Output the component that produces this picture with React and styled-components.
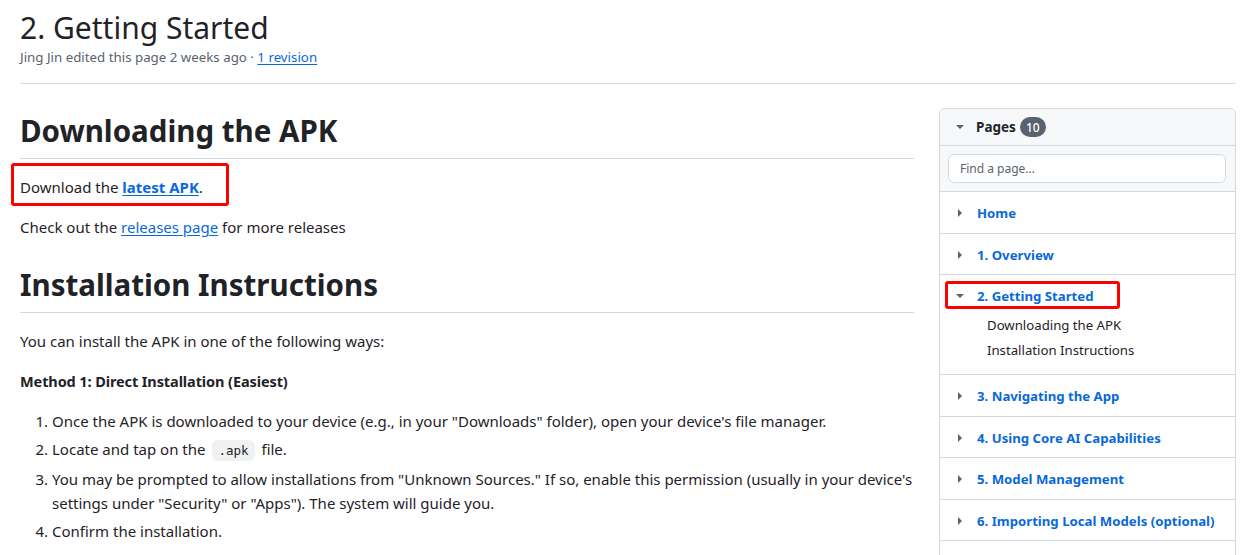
import React from 'react'
import styled, { createGlobalStyle } from 'styled-components'

const GlobalStyle = createGlobalStyle`
  body {
    margin: 0;
    background: #fff;
    color: #1f2328;
    font-family: "Noto Sans", "Liberation Sans", sans-serif;
  }
`

const Page = styled.div`
  padding: 0 6px 0 20px;
  width: 1242px;
  height: 555px;
  box-sizing: border-box;
  overflow: hidden;
`

const PageHead = styled.header`
  padding-top: 8px;
  padding-bottom: 16px;
  border-bottom: 1px solid #d1d9e0;
`

const PageTitle = styled.h1`
  margin: 0;
  font-size: 30px;
  font-weight: 400;
  line-height: 40px;
`

const Meta = styled.div`
  font-size: 13.3px;
  color: #59636e;
  line-height: 20px;
  margin-top: -1px;
`

const Link = styled.a`
  color: #0969da;
  text-decoration: underline;
  text-underline-offset: 2px;
  font-weight: ${p => (p.$strong ? 700 : 400)};
`

const Main = styled.div`
  display: flex;
  gap: 25px;
  align-items: flex-start;
  padding-top: 27px;
`

const Content = styled.article`
  flex: 1;
  min-width: 0;
  font-size: 15px;
  line-height: 24px;
`

const H1 = styled.h2`
  margin: ${p => (p.$first ? '0' : '26px')} 0 16px;
  padding-bottom: 7px;
  font-size: 29.5px;
  font-weight: 700;
  line-height: 40px;
  border-bottom: 1px solid #d1d9e0;
`

const P = styled.p`
  margin: 0 0 16px;
  position: relative;
`

const Strong = styled.strong`
  font-size: 14.5px;
  letter-spacing: -0.1px;
`

/* red annotation box drawn over the paragraph */
const Callout = styled.span`
  position: absolute;
  left: -9px;
  top: -12px;
  width: 218px;
  height: 43px;
  border: 3px solid #f00;
  border-radius: 3px;
  box-sizing: border-box;
  pointer-events: none;
`

const List = styled.ol`
  margin: 0;
  padding-left: 32px;
`

const Item = styled.li`
  margin-top: ${p => (p.$first ? 0 : '4px')};
`

const Code = styled.code`
  font-family: "DejaVu Sans Mono", "Liberation Mono", monospace;
  font-size: 12.5px;
  background: #eff1f3;
  border-radius: 6px;
  padding: 3px 6px;
  margin: 0 3px;
`

const Sidebar = styled.aside`
  width: 295px;
  flex-shrink: 0;
  border: 1px solid #d1d9e0;
  border-radius: 6px;
  overflow: hidden;
  font-size: 13.2px;
  margin-top: -3px;
  padding-bottom: 60px;
`

const SideHead = styled.div`
  display: flex;
  align-items: center;
  height: 36px;
  padding-left: 16px;
  background: #f6f8fa;
  border-bottom: 1px solid #d1d9e0;
  font-weight: 700;
  font-size: 13.5px;
`

const HeadLabel = styled.span`
  margin-left: 12px;
  margin-right: 4px;
`

const Counter = styled.span`
  display: inline-flex;
  align-items: center;
  justify-content: center;
  min-width: 26px;
  height: 20px;
  padding: 0 5px;
  box-sizing: border-box;
  border-radius: 10px;
  background: #59636e;
  color: #fff;
  font-size: 12px;
  font-weight: 500;
`

const SearchWrap = styled.div`
  padding: 8px 9px 8px 8px;
  background: #f6f8fa;
  border-bottom: 1px solid #d1d9e0;
`

const Search = styled.div`
  height: 27px;
  border: 1px solid #d1d9e0;
  border-radius: 6px;
  background: #fff;
  padding: 0 11px;
  display: flex;
  align-items: center;
  color: #59636e;
  font-size: 12px;
`

const Row = styled.div`
  border-bottom: 1px solid #d1d9e0;
  padding: 11px 0 ${p => (p.$open ? '11px' : '9.5px')} 16px;
`

const RowHead = styled.div`
  display: flex;
  align-items: center;
  gap: 13px;
  height: 20px;
  position: relative;
`

const Caret = styled.svg`
  width: 8px;
  height: 8px;
  fill: #59636e;
  flex-shrink: 0;
`

const RowLink = styled.a`
  color: #0969da;
  font-weight: 700;
  text-decoration: none;
`

const RowCallout = styled.span`
  position: absolute;
  left: -11px;
  top: -5px;
  width: 175px;
  height: 28px;
  border: 3px solid #f00;
  border-radius: 3px;
  box-sizing: border-box;
  pointer-events: none;
`

const SubList = styled.ul`
  list-style: none;
  margin: 7px 0 0;
  padding: 0 0 0 31px;
  line-height: 25px;
  font-size: 13.2px;
`

const pages = [
  'Home',
  '1. Overview',
  '2. Getting Started',
  '3. Navigating the App',
  '4. Using Core AI Capabilities',
  '5. Model Management',
  '6. Importing Local Models (optional)'
]

const CaretIcon = ({ open }) => (
  <Caret viewBox='0 0 8 8'>
    {open ? <path d='M0 2h8L4 6z' /> : <path d='M2 0v8l4-4z' />}
  </Caret>
)

export default function App () {
  return (
    <Page>
      <GlobalStyle />
      <PageHead>
        <PageTitle>2. Getting Started</PageTitle>
        <Meta>
          Jing Jin edited this page 2 weeks ago · <Link href='#'>1 revision</Link>
        </Meta>
      </PageHead>
      <Main>
        <Content>
          <H1 $first>Downloading the APK</H1>
          <P>
            Download the <Link href='#' $strong>latest APK</Link>.
            <Callout />
          </P>
          <P>Check out the <Link href='#'>releases page</Link> for more releases</P>
          <H1>Installation Instructions</H1>
          <P>You can install the APK in one of the following ways:</P>
          <P><Strong>Method 1: Direct Installation (Easiest)</Strong></P>
          <List>
            <Item $first>Once the APK is downloaded to your device (e.g., in your "Downloads" folder), open your device's file manager.</Item>
            <Item>Locate and tap on the <Code>.apk</Code> file.</Item>
            <Item>You may be prompted to allow installations from "Unknown Sources." If so, enable this permission (usually in your device's settings under "Security" or "Apps"). The system will guide you.</Item>
            <Item>Confirm the installation.</Item>
          </List>
        </Content>
        <Sidebar>
          <SideHead>
            <CaretIcon open />
            <HeadLabel>Pages</HeadLabel>
            <Counter>10</Counter>
          </SideHead>
          <SearchWrap>
            <Search>Find a page...</Search>
          </SearchWrap>
          {pages.map(name => {
            const open = name === '2. Getting Started'
            return (
              <Row key={name} $open={open}>
                <RowHead>
                  <CaretIcon open={open} />
                  <RowLink href='#'>{name}</RowLink>
                  {open && <RowCallout />}
                </RowHead>
                {open && (
                  <SubList>
                    <li>Downloading the APK</li>
                    <li>Installation Instructions</li>
                  </SubList>
                )}
              </Row>
            )
          })}
        </Sidebar>
      </Main>
    </Page>
  )
}
